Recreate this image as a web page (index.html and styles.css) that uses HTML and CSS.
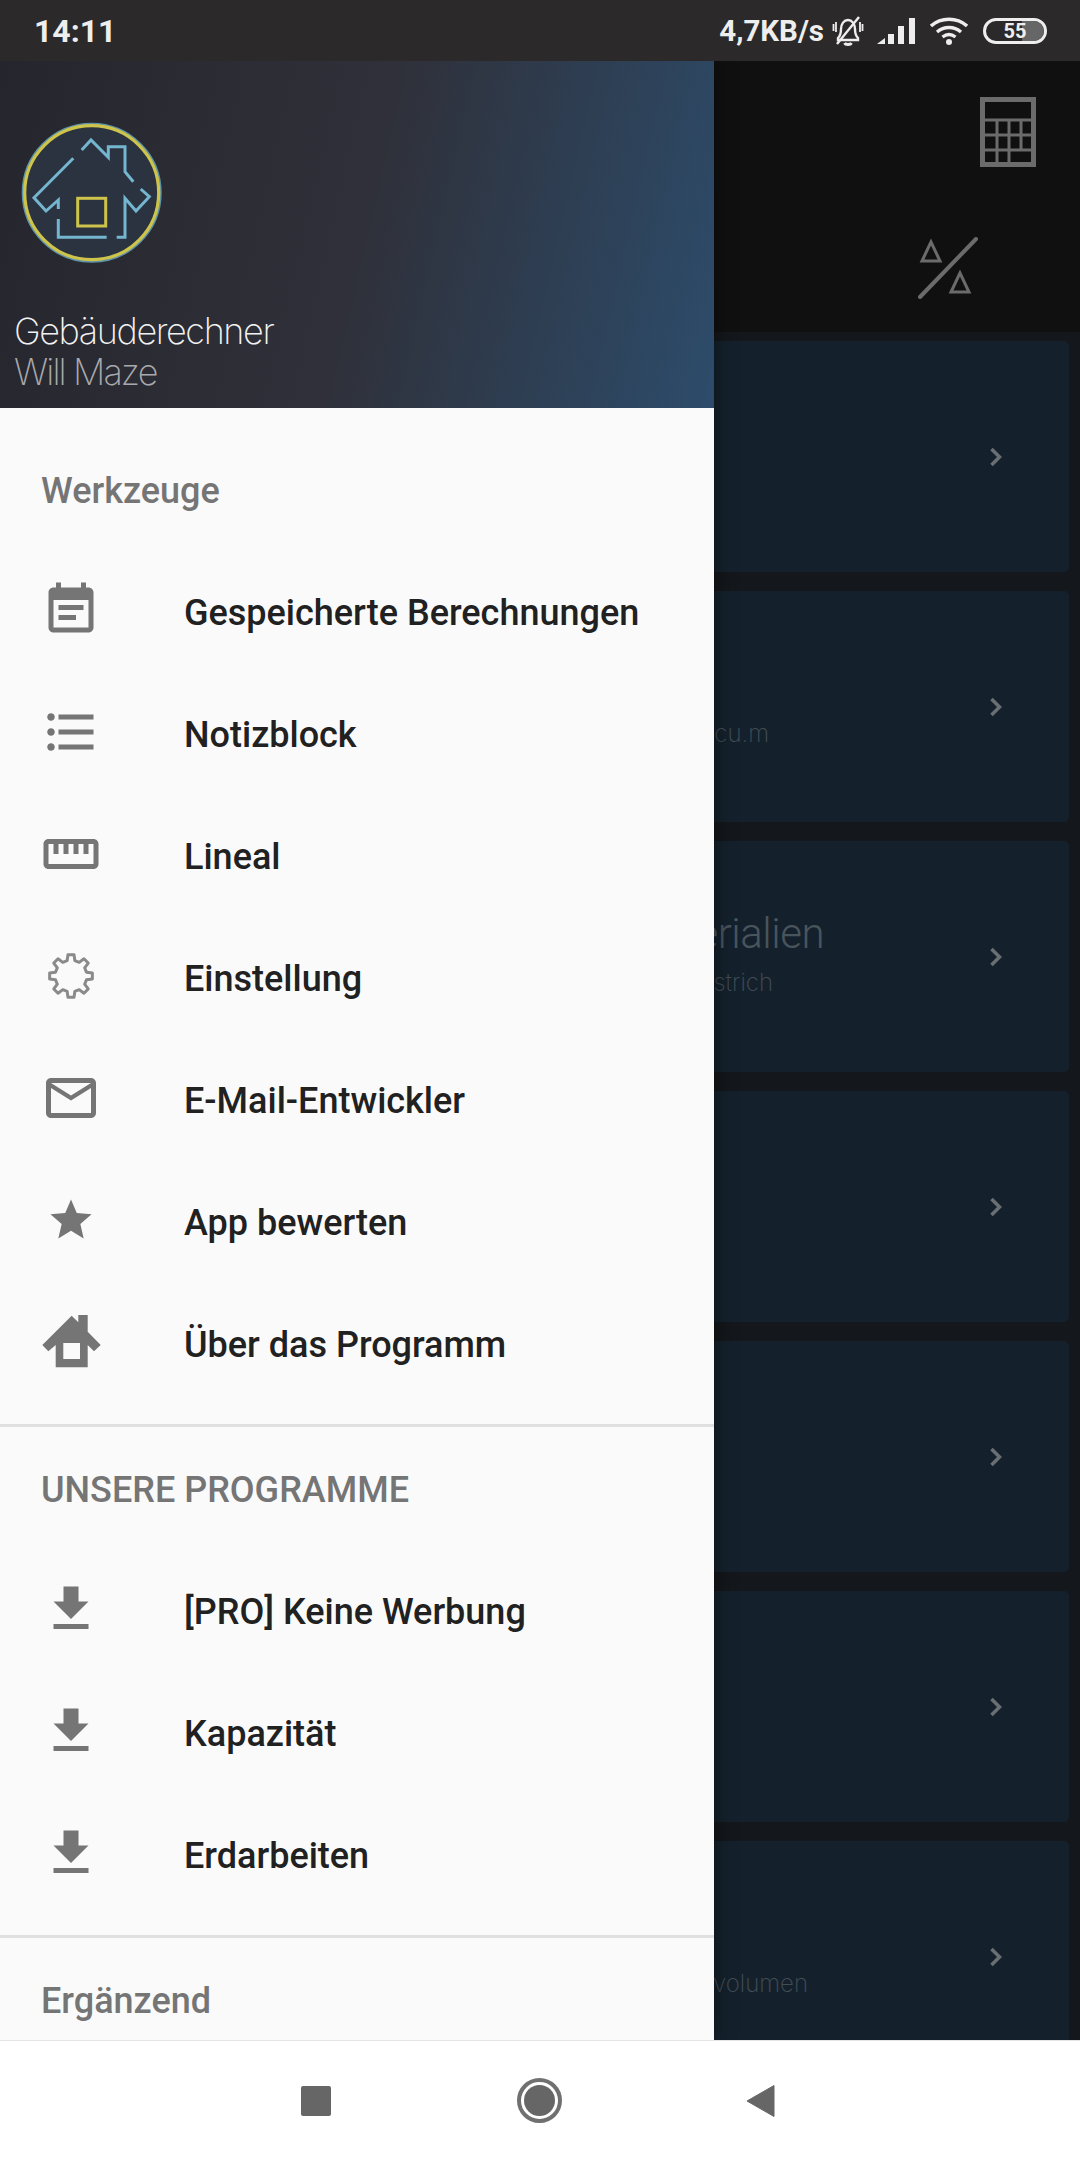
FILE: index.html
```html
<!DOCTYPE html>
<html lang="de">
<head>
  <meta charset="UTF-8" />
  <title>Gebäuderechner</title>
  <link rel="stylesheet" href="styles.css">
</head>
<body>
  <div class="phone">
    <!-- Status bar -->
    <div class="status-bar">
      <span class="time">14:11</span>
      <div class="status-right">
        <span class="speed">4,7KB/s</span>
        <svg class="bell" viewBox="0 0 32 30" fill="none" stroke="#eee" stroke-width="2.400">
          <path d="M6 22c2-2 3-4 3-9 0-5 3-9 7-9s7 4 7 9c0 5 1 7 3 9v2H6z" />
          <path d="M12.500 27c1 2 6 2 7 0" stroke-width="3" />
          <path d="M27 1L5 28" />
          <path d="M1.500 8v7M4 6v10M30.500 8v7M28 6v10" stroke-width="1.800" />
        </svg>
        <svg class="signal" viewBox="0 0 38 26" fill="#eee">
          <path d="M0 26l8-6v6z" />
          <rect x="11" y="16" width="6" height="10" />
          <rect x="21" y="8" width="6" height="18" />
          <rect x="32" y="0" width="6" height="26" />
        </svg>
        <svg class="wifi" viewBox="0 0 38 28" fill="none" stroke="#eee" stroke-width="3.400">
          <path d="M1 9c10-9 26-9 36 0" />
          <path d="M7 15c7-6 17-6 24 0" />
          <path d="M12.500 20c4-3 9-3 13 0" />
          <circle cx="19" cy="25" r="3" fill="#eee" stroke="none" />
        </svg>
        <div class="battery">
          <span class="battery-fill"></span>
          <span class="battery-text">55</span>
        </div>
      </div>
    </div>

    <div class="main">
      <!-- Page behind the drawer -->
      <div class="app-bar">
        <svg class="calc-icon" viewBox="0 0 56 70" fill="none" stroke="#6b6b6b" stroke-width="3">
          <rect x="2.500" y="2.500" width="51" height="65" stroke-width="5" />
          <path d="M3 23h50M3 38h50M3 53h50M17 23v44M29 23v44M41 23v30" />
        </svg>
        <svg class="delta-icon" viewBox="0 0 60 62" fill="none" stroke="#6b6b6b">
          <path d="M2 60L58 2" stroke-width="4" stroke-linecap="round" />
          <path d="M13 5L4 24h18z" stroke-width="3" />
          <path d="M42 36l-9 19h18z" stroke-width="3" />
        </svg>
      </div>

      <div class="cards">
        <div class="card">
          <svg class="chevron" viewBox="0 0 12 20"><path d="M1.500 2l8 8-8 8" /></svg>
        </div>
        <div class="card">
          <div class="card-text card-text-low">
            <span class="card-sub line-cum">Volumen, cu.m</span>
          </div>
          <svg class="chevron" viewBox="0 0 12 20"><path d="M1.500 2l8 8-8 8" /></svg>
        </div>
        <div class="card">
          <div class="card-text card-text-pair">
            <span class="card-title line-mat">Materialien</span>
            <span class="card-sub line-strich">Beton, Estrich</span>
          </div>
          <svg class="chevron" viewBox="0 0 12 20"><path d="M1.500 2l8 8-8 8" /></svg>
        </div>
        <div class="card">
          <svg class="chevron" viewBox="0 0 12 20"><path d="M1.500 2l8 8-8 8" /></svg>
        </div>
        <div class="card">
          <svg class="chevron" viewBox="0 0 12 20"><path d="M1.500 2l8 8-8 8" /></svg>
        </div>
        <div class="card">
          <svg class="chevron" viewBox="0 0 12 20"><path d="M1.500 2l8 8-8 8" /></svg>
        </div>
        <div class="card">
          <div class="card-text card-text-low">
            <span class="card-sub line-vol">Gesamtvolumen</span>
          </div>
          <svg class="chevron" viewBox="0 0 12 20"><path d="M1.500 2l8 8-8 8" /></svg>
        </div>
      </div>

      <!-- Navigation drawer -->
      <div class="drawer">
        <div class="drawer-header">
          <svg class="logo" viewBox="0 0 160 160" fill="none">
            <circle cx="81.700" cy="77.700" r="69" fill="#2b3341" stroke="#5f93a8" stroke-width="2" />
            <circle cx="81.700" cy="77.700" r="67" stroke="#cfc44b" stroke-width="3.200" />
            <g stroke="#74b6cf" stroke-width="3">
              <path d="M71.700 35L81 25l17.300 17.300V31.700H115V56.700l8.300 10" />
              <path d="M63.300 43.300L24 82.700 36 96l12.300-11v9" />
              <path d="M48.300 104v18.300h48.400" />
              <path d="M106.700 122.300H115V83.300L126 96l13.300-14.300-8.600-7.700" />
            </g>
            <rect x="67.700" y="83.300" width="28" height="27.700" stroke="#cfc44b" stroke-width="3" />
          </svg>
          <div class="header-title">Gebäuderechner</div>
          <div class="header-sub">Will Maze</div>
        </div>

        <div class="section section-first">
          <div class="section-title">Werkzeuge</div>
          <div class="row">
            <svg class="icon" viewBox="0 0 24 24"><path d="M17 10H7v2h10v-2zm2-7h-1V1h-2v2H8V1H6v2H5c-1.110 0-1.990.9-1.990 2L3 19c0 1.100.89 2 2 2h14c1.100 0 2-.9 2-2V5c0-1.100-.9-2-2-2zm0 16H5V8h14v11zm-5-5H7v2h7v-2z" /></svg>
            <span>Gespeicherte Berechnungen</span>
          </div>
          <div class="row">
            <svg class="icon" viewBox="0 0 24 24"><path d="M4 10.500c-.83 0-1.500.67-1.500 1.500s.67 1.500 1.500 1.500 1.500-.67 1.500-1.500-.67-1.500-1.500-1.500zm0-6c-.83 0-1.500.67-1.500 1.500S3.170 7.500 4 7.500 5.500 6.830 5.500 6 4.830 4.500 4 4.500zm0 12c-.83 0-1.500.68-1.500 1.500s.68 1.500 1.500 1.500 1.500-.68 1.500-1.500-.67-1.500-1.500-1.500zM7 19h14v-2H7v2zm0-6h14v-2H7v2zm0-8v2h14V5H7z" /></svg>
            <span>Notizblock</span>
          </div>
          <div class="row">
            <svg class="icon" viewBox="0 0 24 24"><path d="M21 6H3c-1.100 0-2 .9-2 2v8c0 1.100.9 2 2 2h18c1.100 0 2-.9 2-2V8c0-1.100-.9-2-2-2zm0 10H3V8h2v4h2V8h2v4h2V8h2v4h2V8h2v4h2V8h2v8z" /></svg>
            <span>Lineal</span>
          </div>
          <div class="row">
            <svg class="icon icon-gear" viewBox="-32 -32 64 64">
              <polygon points="-4.110,-16.500 -3.200,-22.780 3.200,-22.780 4.110,-16.500 8.760,-14.570 13.840,-18.370 18.370,-13.840 14.570,-8.760 16.500,-4.110 22.780,-3.200 22.780,3.200 16.500,4.110 14.570,8.760 18.370,13.840 13.840,18.370 8.760,14.570 4.110,16.500 3.200,22.780 -3.200,22.780 -4.110,16.500 -8.760,14.570 -13.840,18.370 -18.370,13.840 -14.570,8.760 -16.500,4.110 -22.780,3.200 -22.780,-3.200 -16.500,-4.110 -14.570,-8.760 -18.370,-13.840 -13.840,-18.370 -8.760,-14.570" />
            </svg>
            <span>Einstellung</span>
          </div>
          <div class="row">
            <svg class="icon" viewBox="0 0 24 24"><path d="M20 4H4c-1.100 0-1.990.9-1.990 2L2 18c0 1.100.9 2 2 2h16c1.100 0 2-.9 2-2V6c0-1.100-.9-2-2-2zm0 14H4V8l8 5 8-5v10zm-8-7L4 6h16l-8 5z" /></svg>
            <span>E-Mail-Entwickler</span>
          </div>
          <div class="row">
            <svg class="icon" viewBox="-2.600 -2.600 29.200 29.200"><path d="M12 17.270L18.180 21l-1.640-7.030L22 9.240l-7.190-.61L12 2 9.190 8.630 2 9.240l5.460 4.730L5.820 21z" /></svg>
            <span>App bewerten</span>
          </div>
          <div class="row">
            <svg class="icon" viewBox="0 0 60 60"><path fill-rule="evenodd" d="M30.700 3.700l6.600 6.600V3h9.400v16.700L59.700 33 53 39.300 46.700 33v22.300H14.700V33L7.300 39.300 1.300 33zM22.300 31v16H39V31z" /></svg>
            <span>Über das Programm</span>
          </div>
        </div>

        <div class="section">
          <div class="section-title">UNSERE PROGRAMME</div>
          <div class="row">
            <svg class="icon" viewBox="0 0 24 24"><path d="M19 9h-4V3H9v6H5l7 7 7-7zM5 18v2h14v-2H5z" /></svg>
            <span>[PRO] Keine Werbung</span>
          </div>
          <div class="row">
            <svg class="icon" viewBox="0 0 24 24"><path d="M19 9h-4V3H9v6H5l7 7 7-7zM5 18v2h14v-2H5z" /></svg>
            <span>Kapazität</span>
          </div>
          <div class="row">
            <svg class="icon" viewBox="0 0 24 24"><path d="M19 9h-4V3H9v6H5l7 7 7-7zM5 18v2h14v-2H5z" /></svg>
            <span>Erdarbeiten</span>
          </div>
        </div>

        <div class="section-title">Ergänzend</div>
      </div>
    </div>

    <!-- Navigation bar -->
    <div class="nav-bar">
      <span class="nav-square"></span>
      <span class="nav-circle"></span>
      <svg class="nav-back" viewBox="0 0 29 34"><path d="M28 1.500v31L1 17z" /></svg>
    </div>
  </div>
</body>
</html>
```

FILE: styles.css
```css
/* General Styling */
html,
body {
  margin: 0;
  padding: 0;
  background: #14171b;
  font-family: Roboto, "Noto Sans", sans-serif;
}

.phone {
  width: 1080px;
  height: 2160px;
  display: flex;
  flex-direction: column;
  overflow: hidden;
}

/* Status Bar */
.status-bar {
  height: 61px;
  flex: none;
  display: flex;
  align-items: center;
  justify-content: space-between;
  padding: 0 33px 0 34px;
  background: #2b2929;
  color: #eeeeee;
}

.time {
  font-size: 32px;
  font-weight: 700;
}

.status-right {
  display: flex;
  align-items: center;
}

.speed {
  font-size: 29.500px;
  font-weight: 700;
  margin-right: 8px;
}

.bell {
  width: 32px;
  height: 30px;
  margin-right: 13px;
}

.signal {
  width: 38px;
  height: 26px;
  margin-right: 15px;
}

.wifi {
  width: 38px;
  height: 28px;
  margin-right: 15px;
}

.battery {
  position: relative;
  width: 64px;
  height: 26px;
  box-sizing: border-box;
  border: 3px solid #eeeeee;
  border-radius: 13px;
  overflow: hidden;
  display: flex;
  align-items: center;
  justify-content: center;
}

.battery-fill {
  position: absolute;
  top: 0;
  right: 0;
  bottom: 0;
  width: 22px;
  background: #666666;
}

.battery-text {
  position: relative;
  font-size: 20px;
  font-weight: 700;
  line-height: 20px;
}

/* Page behind the drawer */
.main {
  position: relative;
  flex: 1;
  min-height: 0;
  overflow: hidden;
  background: #14171b;
}

.app-bar {
  height: 271px;
  box-sizing: border-box;
  padding: 36px 44px 0 0;
  display: flex;
  flex-direction: column;
  align-items: flex-end;
  gap: 70px;
  background: #101011;
}

.calc-icon {
  width: 56px;
  height: 70px;
}

.delta-icon {
  width: 60px;
  height: 62px;
  margin-right: 58px;
}

.cards {
  display: flex;
  flex-direction: column;
  gap: 19px;
  padding: 9px 11px 0 0;
}

.card {
  height: 231px;
  flex: none;
  display: flex;
  align-items: center;
  padding-right: 67px;
  background: #14212c;
  border-radius: 0 5px 5px 0;
}

.card-text {
  display: flex;
  flex-direction: column;
}

.card-text-low {
  margin-top: 54px;
}

.card-text-pair {
  padding-bottom: 6px;
}

.card-title {
  font-size: 42px;
  font-weight: 300;
  letter-spacing: -0.500px;
  line-height: 50px;
  margin-bottom: 9px;
  text-align: right;
  color: #4a545c;
  white-space: nowrap;
}

.card-sub {
  font-family: Inter, sans-serif;
  font-size: 24px;
  font-weight: 200;
  line-height: 30px;
  text-align: right;
  color: #434d55;
  white-space: nowrap;
}

.line-cum {
  width: 769px;
}

.line-mat {
  width: 824px;
}

.line-strich {
  width: 773px;
}

.line-vol {
  width: 808px;
}

.chevron {
  width: 12px;
  height: 20px;
  margin-left: auto;
  fill: none;
  stroke: #6a6f73;
  stroke-width: 3.500;
}

/* Navigation Drawer */
.drawer {
  position: absolute;
  top: 0;
  left: 0;
  bottom: 0;
  width: 714px;
  overflow: hidden;
  background: #fafafa;
  box-shadow: 4px 0 18px rgba(0, 0, 0, 0.35);
}

.drawer-header {
  height: 347px;
  box-sizing: border-box;
  padding: 54px 0 0 14px;
  background: linear-gradient(103deg, #25262d 0%, #2f3039 50%, #2d4c6b 100%);
}

.logo {
  display: block;
  width: 160px;
  height: 160px;
  margin-left: -4px;
  margin-bottom: 35px;
}

.header-title {
  font-family: Inter, sans-serif;
  font-size: 36px;
  font-weight: 200;
  letter-spacing: -1.400px;
  line-height: 42px;
  color: #f2f2f2;
}

.header-sub {
  font-family: Inter, sans-serif;
  font-size: 36px;
  font-weight: 200;
  letter-spacing: -1.900px;
  line-height: 40px;
  color: #a9a9ad;
}

.section {
  padding-bottom: 19px;
  border-bottom: 3px solid #e0e0e0;
}

.section-first {
  padding-top: 20px;
}

.section-title {
  height: 123px;
  box-sizing: border-box;
  display: flex;
  align-items: center;
  padding: 2px 0 0 41px;
  font-size: 36px;
  font-weight: 500;
  color: #757575;
}

.row {
  height: 122px;
  display: flex;
  align-items: center;
  padding-left: 41px;
  font-size: 36px;
  font-weight: 500;
  color: #212121;
}

.row span {
  margin-top: 2px;
}

.icon {
  width: 60px;
  height: 60px;
  flex: none;
  margin-right: 83px;
  margin-top: -4px;
  fill: #757575;
}

.icon-gear {
  fill: none;
  stroke: #8a8a8a;
  stroke-width: 3.200;
  stroke-linejoin: round;
}

/* Navigation Bar */
.nav-bar {
  height: 120px;
  flex: none;
  box-sizing: border-box;
  display: flex;
  align-items: center;
  justify-content: center;
  gap: 185px;
  padding-right: 4px;
  background: #ffffff;
  border-top: 1px solid #e4e4e4;
}

.nav-square {
  width: 30px;
  height: 30px;
  border-radius: 2px;
  background: #666666;
}

.nav-circle {
  width: 45px;
  height: 45px;
  box-sizing: border-box;
  margin: 0 -1px 0 1px;
  border: 4px solid #707070;
  border-radius: 50%;
  padding: 3px;
  background: #666666 content-box;
}

.nav-back {
  width: 29px;
  height: 34px;
  fill: #666666;
  stroke: #666666;
  stroke-width: 1;
  stroke-linejoin: round;
}
```
